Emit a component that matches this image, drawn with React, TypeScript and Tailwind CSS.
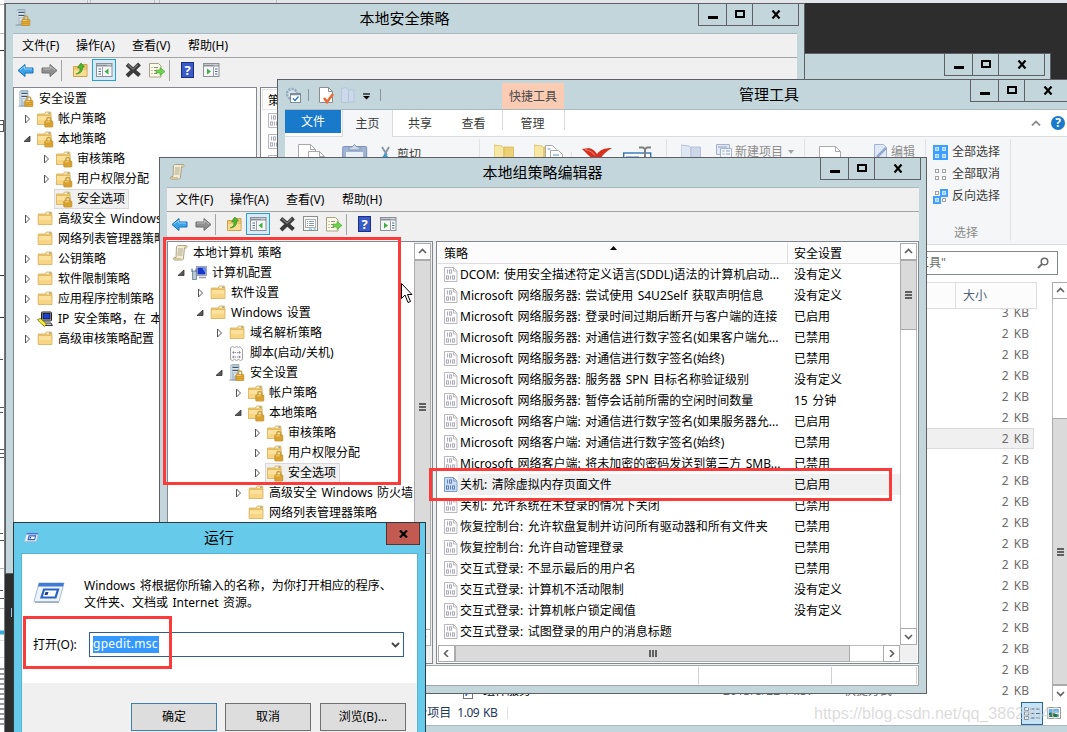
import React from 'react';
import clsx from 'clsx';

type IconName = 'server' | 'folder' | 'lockFolder' | 'ip' | 'scroll' | 'computer' | 'script';

interface TreeItem {
  level: number;
  icon: IconName;
  label: string;
  arrow?: 'open' | 'closed';
  selected?: boolean;
}

const INDENT = ['pl-[4px]', 'pl-[9px]', 'pl-[28px]', 'pl-[47px]', 'pl-[66px]', 'pl-[85px]'];

const securityTree: TreeItem[] = [
  { level: 0, icon: 'server', label: '安全设置' },
  { level: 1, icon: 'lockFolder', label: '帐户策略', arrow: 'closed' },
  { level: 1, icon: 'lockFolder', label: '本地策略', arrow: 'open' },
  { level: 2, icon: 'lockFolder', label: '审核策略', arrow: 'closed' },
  { level: 2, icon: 'lockFolder', label: '用户权限分配', arrow: 'closed' },
  { level: 2, icon: 'lockFolder', label: '安全选项', selected: true },
  { level: 1, icon: 'folder', label: '高级安全 Windows 防火墙', arrow: 'closed' },
  { level: 1, icon: 'folder', label: '网络列表管理器策略' },
  { level: 1, icon: 'folder', label: '公钥策略', arrow: 'closed' },
  { level: 1, icon: 'folder', label: '软件限制策略', arrow: 'closed' },
  { level: 1, icon: 'folder', label: '应用程序控制策略', arrow: 'closed' },
  { level: 1, icon: 'ip', label: 'IP 安全策略，在 本地计算机', arrow: 'closed' },
  { level: 1, icon: 'folder', label: '高级审核策略配置', arrow: 'closed' },
];

const policyTree: TreeItem[] = [
  { level: 0, icon: 'scroll', label: '本地计算机 策略' },
  { level: 1, icon: 'computer', label: '计算机配置', arrow: 'open' },
  { level: 2, icon: 'folder', label: '软件设置', arrow: 'closed' },
  { level: 2, icon: 'folder', label: 'Windows 设置', arrow: 'open' },
  { level: 3, icon: 'folder', label: '域名解析策略', arrow: 'closed' },
  { level: 3, icon: 'script', label: '脚本(启动/关机)' },
  { level: 3, icon: 'server', label: '安全设置', arrow: 'open' },
  { level: 4, icon: 'lockFolder', label: '帐户策略', arrow: 'closed' },
  { level: 4, icon: 'lockFolder', label: '本地策略', arrow: 'open' },
  { level: 5, icon: 'lockFolder', label: '审核策略', arrow: 'closed' },
  { level: 5, icon: 'lockFolder', label: '用户权限分配', arrow: 'closed' },
  { level: 5, icon: 'lockFolder', label: '安全选项', arrow: 'closed', selected: true },
  { level: 4, icon: 'folder', label: '高级安全 Windows 防火墙', arrow: 'closed' },
  { level: 4, icon: 'folder', label: '网络列表管理器策略' },
];

const policies: [string, string][] = [
  ['DCOM: 使用安全描述符定义语言(SDDL)语法的计算机启动...', '没有定义'],
  ['Microsoft 网络服务器: 尝试使用 S4U2Self 获取声明信息', '没有定义'],
  ['Microsoft 网络服务器: 登录时间过期后断开与客户端的连接', '已启用'],
  ['Microsoft 网络服务器: 对通信进行数字签名(如果客户端允...', '已禁用'],
  ['Microsoft 网络服务器: 对通信进行数字签名(始终)', '已禁用'],
  ['Microsoft 网络服务器: 服务器 SPN 目标名称验证级别', '没有定义'],
  ['Microsoft 网络服务器: 暂停会话前所需的空闲时间数量', '15 分钟'],
  ['Microsoft 网络客户端: 对通信进行数字签名(如果服务器允...', '已启用'],
  ['Microsoft 网络客户端: 对通信进行数字签名(始终)', '已禁用'],
  ['Microsoft 网络客户端: 将未加密的密码发送到第三方 SMB...', '已禁用'],
  ['关机: 清除虚拟内存页面文件', '已启用'],
  ['关机: 允许系统在未登录的情况下关闭', '已禁用'],
  ['恢复控制台: 允许软盘复制并访问所有驱动器和所有文件夹', '已禁用'],
  ['恢复控制台: 允许自动管理登录', '已禁用'],
  ['交互式登录: 不显示最后的用户名', '已禁用'],
  ['交互式登录: 计算机不活动限制', '没有定义'],
  ['交互式登录: 计算机帐户锁定阈值', '没有定义'],
  ['交互式登录: 试图登录的用户的消息标题', ''],
];

const sizes = ['3 KB', ...Array(18).fill('2 KB')];

const Lock = () => (
  <g>
    <path d="M9.500 10V8a2 2 0 0 1 4 0v2" fill="none" stroke="#c9a04a" strokeWidth="1.400" />
    <rect x="7.500" y="9.500" width="8" height="6" rx=".6" fill="#e3ab33" stroke="#b8841f" strokeWidth=".7" />
    <path d="M8 11.500h7M8 13.500h7" stroke="#c48f22" strokeWidth=".6" />
    <path d="M8.500 10.300h4" stroke="#ffe08a" strokeWidth=".8" />
  </g>
);

const FolderShape = () => (
  <g>
    <path d="M1.500 3.500h7l1-2h4.500a1 1 0 0 1 1 1v11.500h-13.500z" fill="#f0c96c" stroke="#d9ae56" strokeWidth=".8" />
    <path d="M9.500 2.700h3" stroke="#fff" strokeWidth="1" />
    <path d="M12.500 2.700h1.300" stroke="#3b8ee0" strokeWidth="1" />
    <path d="M1.500 5h13.500v9h-13.500z" fill="#fbe19b" stroke="#dcb565" strokeWidth=".8" />
    <path d="M2 9.500h12.500v4h-12.500z" fill="#f7d583" />
  </g>
);

function TreeIcon({ name }: { name: IconName }) {
  return (
    <svg width="18" height="18" viewBox="0 0 18 18" className="block shrink-0">
      {name === 'folder' && (
        <g transform="translate(-.2 .5)">
          <FolderShape />
        </g>
      )}
      {name === 'lockFolder' && (
        <>
          <g transform="translate(-1 .5)">
            <FolderShape />
          </g>
          <g transform="translate(.3 1.500)">
            <Lock />
          </g>
        </>
      )}
      {name === 'server' && (
        <>
          <path d="M1.500 1.500l1.500-1h7v15h-8.500z" fill="#b4c5d2" stroke="#8da1b1" strokeWidth=".7" />
          <path d="M2 1.500v14" stroke="#dbe6ee" strokeWidth="1.200" />
          <path d="M3.500 3.500h6M3.500 6.500h6" stroke="#41586b" strokeWidth="1.100" />
          <path d="M3.500 4.700h6M3.500 7.700h6" stroke="#edf4f9" strokeWidth=".9" />
          <rect x="5" y="9.500" width="2" height="2" fill="#e8f1f7" />
          <path d="M.5 16.200h8" stroke="#8fa4b3" />
          <g transform="translate(-.7 1)">
            <Lock />
          </g>
        </>
      )}
      {name === 'scroll' && (
        <>
          <path d="M4.500 2.500c.5-1 1-1 2-1h7.500c1.500 0 1.500 2.500 0 2.500h-1.500l-1 10c0 2-1 2-2 2h-7c-1.500 0-1.500-2.500 0-2.500h1.500z" fill="#f4ecd2" stroke="#a39a80" strokeWidth=".9" />
          <path d="M6 5h5M6 7h5M5.500 9h5M5.500 11h5" stroke="#aaa58f" strokeWidth=".9" />
          <path d="M12 2.500h3v1.500h-3zM2 14h7v1.500h-7z" fill="#d5c28e" />
        </>
      )}
      {name === 'computer' && (
        <>
          <rect x="5.500" y="2.500" width="10" height="9" fill="#dcdfe6" stroke="#8c93a3" strokeWidth=".8" />
          <rect x="6.500" y="3.500" width="8" height="7" fill="#1736c8" />
          <path d="M11 3.500h3.500v6z" fill="#6d93f2" />
          <path d="M8 13.500h7" stroke="#9aa0aa" strokeWidth="1.600" />
          <rect x="1.500" y="7" width="4" height="8.500" fill="#b8c9d6" stroke="#6d8192" strokeWidth=".8" />
          <path d="M1 4.500v3.500M5 4.500v3.500" stroke="#4c6a80" />
        </>
      )}
      {name === 'script' && (
        <>
          <path d="M1.500 3.500l2-1 2 1 2-1 2 1 1.500-1 2.500 3v10l-2 1-2-1-2 1-2-1-2 1-2-1z" fill="#fafafa" stroke="#a3a3a3" />
          <path d="M3 8.500l2-1.500v3zM12 8.500l-2-1.500v3zM3 13l2-1.500v3zM12 13l-2-1.500v3z" fill="#8a8a9a" />
          <path d="M5.500 8.500h1.500M8 8.500h1.500M5.500 13h1.500M8 13h1.500" stroke="#8a8a9a" />
        </>
      )}
      {name === 'ip' && (
        <>
          <rect x="4.500" y="2" width="10" height="9" rx="1" fill="#b9bcc4" stroke="#222" />
          <rect x="6" y="3.500" width="7" height="5.500" fill="#1c3fd4" stroke="#111" strokeWidth=".8" />
          <path d="M5 13h9l1.500 2.500h-9z" fill="#c6c8ce" stroke="#222" strokeWidth=".9" />
          <path d="M.5 9.500l3-1 6 5.500-2 2.500-5-4.500z" fill="#f6ee2e" stroke="#5b5a10" strokeWidth=".7" />
        </>
      )}
    </svg>
  );
}

const PolicyIcon = ({ active }: { active?: boolean }) => (
  <svg width="14" height="15" viewBox="0 0 14 15" className="block shrink-0">
    <path d="M.5.5h9l3.500 3.500v10.500h-12.500z" fill={active ? '#c9def5' : '#fcfcfc'} stroke={active ? '#7f9fc9' : '#b9b9bd'} />
    <path d="M9.500.500v3.500h3.500" fill="none" stroke={active ? '#7f9fc9' : '#b9b9bd'} />
    <g fill="none" stroke={active ? '#5878ad' : '#a3a3b4'} strokeWidth=".9">
      <path d="M3.500 2.500v4M6.500 8.500v4" />
      <rect x="5.500" y="2.900" width="2" height="3.200" />
      <rect x="2.500" y="8.900" width="2" height="3.200" />
      <rect x="8.500" y="8.900" width="2" height="3.200" />
    </g>
  </svg>
);

const Arrow = ({ state }: { state?: 'open' | 'closed' }) => (
  <svg width="14" height="12" viewBox="0 0 14 12" className="block shrink-0">
    {state === 'closed' && <path d="M2.500 2v8l4-4z" fill="#fff" stroke="#555" strokeWidth="1" />}
    {state === 'open' && <path d="M7 3v5.500h-6z" fill="#595959" stroke="#333" strokeWidth=".8" />}
  </svg>
);

function Tree({ items }: { items: TreeItem[] }) {
  return (
    <div className="flex min-w-0 flex-1 flex-col overflow-hidden pt-px">
      {items.map((item) => (
        <div key={item.label} className={clsx('flex h-5 shrink-0 items-center', INDENT[item.level])}>
          {item.level > 0 && <Arrow state={item.arrow} />}
          <div
            className={clsx(
              'flex h-5 shrink-0 items-center gap-[3px] whitespace-nowrap',
              item.selected && '-ml-0.5 border border-[#d9d9d9] bg-[#f0f0f0] pl-px pr-[3px]'
            )}
          >
            <TreeIcon name={item.icon} />
            <span>{item.label}</span>
          </div>
        </div>
      ))}
    </div>
  );
}

function WindowControls({ className }: { className?: string }) {
  return (
    <div className={clsx('flex h-[22px] w-[101px] shrink-0 border-x border-b border-[#5f6066]', className)}>
      <div className="flex w-[27px] justify-center pt-[12px]">
        <div className="h-[3px] w-[10px] bg-black" />
      </div>
      <div className="flex w-[27px] justify-center border-x border-[#5f6066] pt-[6px]">
        <div className="h-[8px] w-[10px] border-2 border-black" />
      </div>
      <div className="flex flex-1 justify-center pt-[6px]">
        <svg width="10" height="9" viewBox="0 0 10 9">
          <path d="M1.500 .5l7 8M8.500 .500l-7 8" stroke="#000" strokeWidth="2.200" />
        </svg>
      </div>
    </div>
  );
}

const BackArrow = ({ gray }: { gray?: boolean }) => (
  <svg width="17" height="15" viewBox="0 0 17 15" className={clsx('block shrink-0', gray && '-scale-x-100')}>
    <path d="M1 7.500l7-6v3.500h8v5h-8v3.500z" fill={gray ? '#8f8f8f' : '#39a3ea'} stroke={gray ? '#6f6f6f' : '#1d6fb8'} />
    <path d="M3 7l4.500-3.500v2.500h7.500" fill="none" stroke={gray ? '#bcbcbc' : '#90d4ff'} />
  </svg>
);

const PanelIcon = ({ right }: { right?: boolean }) => (
  <svg width="17" height="14" viewBox="0 0 17 14" className="block shrink-0">
    <rect x=".5" y=".5" width="15.500" height="13" fill="#f7f7f7" stroke="#8b9099" />
    <path d="M1 2.500h15" stroke="#8b9099" strokeWidth="2" />
    <path d="M11.500 2h1M13.500 2h1" stroke="#fff" />
    {right ? (
      <>
        <path d="M10.500 4v9.500" stroke="#9aa0a8" />
        <path d="M4 5.500v6l4-3z" fill="#3fae49" />
        <path d="M12 6h2.500M12 8.500h2.500M12 11h2.500" stroke="#4a6f9a" />
      </>
    ) : (
      <>
        <path d="M6.500 4v9.500" stroke="#9aa0a8" />
        <path d="M12.500 5.500v6l-4-3z" fill="#3fae49" />
        <path d="M2.500 6h2.500M2.500 8.500h2.500M2.500 11h2.500" stroke="#4a6f9a" />
      </>
    )}
  </svg>
);

function Toolbar({ withProperties }: { withProperties?: boolean }) {
  return (
    <div className="flex h-[26px] items-center pb-[2px] pl-[4px]">
      <BackArrow />
      <div className="w-[7px]" />
      <BackArrow gray />
      <div className="ml-[3px] h-[21px] w-px bg-[#a5a5a5]" />
      <svg width="15" height="16" viewBox="0 0 15 16" className="ml-[11px] block">
        <path d="M.5 4.500h5l1-2h7.500v12h-13.500z" fill="#efc96b" stroke="#cba24c" />
        <path d="M1 8h12.500v6h-12.500z" fill="#f9dd92" />
        <path d="M3 12c3-1 4.500-3 4-6h-2.500l3.500-5 3.500 4h-2c.5 4-2 7-6.500 7z" fill="#49b933" stroke="#2c8a1c" strokeWidth=".6" />
      </svg>
      <div className="ml-[4px] flex h-[22px] w-[24px] items-center justify-center border border-[#26a0da] bg-[#d5e9f6]">
        <PanelIcon />
      </div>
      <svg width="17" height="16" viewBox="0 0 17 16" className="ml-[9px] block">
        <path d="M2 2.500l12.500 11M14.500 2l-12.500 12" stroke="#3a3a3a" strokeWidth="4" />
        <path d="M3 2.700l5 4.500 5-4.500" fill="none" stroke="#7a7a7a" strokeWidth="1.200" />
      </svg>
      {withProperties && (
        <svg width="15" height="16" viewBox="0 0 15 16" className="ml-[7px] block">
          <rect x=".5" y=".5" width="14" height="14" fill="#f8f8f8" stroke="#8d8d8d" />
          <rect x="2.500" y="3.500" width="10" height="8" fill="#fff" stroke="#b0b0b0" />
          <path d="M4 5.500h1M6 5.500h5M4 7.500h1M6 7.500h5M4 9.500h1M6 9.500h5" stroke="#7f97b0" />
          <path d="M6 13h3M10.500 13h2" stroke="#47b4e8" />
        </svg>
      )}
      <svg width="17" height="16" viewBox="0 0 17 16" className={clsx('block', withProperties ? 'ml-[8px]' : 'ml-[7px]')}>
        <path d="M.5 1.500h9l2.500 2.500v11h-11.500z" fill="#fffbe6" stroke="#a9a28a" />
        <path d="M2.500 5.500h1M5 5.500h4M2.500 8.500h1M5 8.500h3M2.500 11.500h1M5 11.500h3" stroke="#8d8d8d" />
        <path d="M7 8h4v-2.500l5 4-5 4v-2.500h-4z" fill="#6ed34e" stroke="#3fa52a" strokeWidth=".6" />
      </svg>
      <div className="ml-[3px] h-[21px] w-px bg-[#a5a5a5]" />
      <div className="ml-[11px] flex h-[16px] w-[13px] items-center justify-center border border-[#1c2f86] bg-[#3a5bc7] text-[13px] font-bold leading-none text-white">
        ?
      </div>
      <div className="w-[9px]" />
      <PanelIcon right />
    </div>
  );
}

const Grip = ({ horizontal }: { horizontal?: boolean }) => (
  <div className={clsx('flex gap-px', !horizontal && 'flex-col')}>
    {[0, 1, 2].map((i) => (
      <div key={i} className={clsx('bg-[#606060]', horizontal ? 'h-[7px] w-[2px]' : 'h-[2px] w-[7px]')} />
    ))}
  </div>
);

const CHEVRONS = { up: 'M1 5l3.500-3.500L8 5', down: 'M1 2l3.500 3.500L8 2', left: 'M6 0L2.500 3.500 6 7', right: 'M3 0l3.500 3.500L3 7' };

const ScrollButton = ({ dir }: { dir: keyof typeof CHEVRONS }) => (
  <div className="flex h-[17px] w-[17px] shrink-0 items-center justify-center border border-[#ababab] bg-white">
    <svg width="9" height="7" viewBox="0 0 9 7">
      <path d={CHEVRONS[dir]} fill="none" stroke="#606060" strokeWidth="1.600" />
    </svg>
  </div>
);

interface MmcProps {
  className: string;
  title: string;
  icon: IconName;
  withProperties?: boolean;
  children: React.ReactNode;
}

function MmcWindow({ className, title, icon, withProperties, children }: MmcProps) {
  return (
    <section className={clsx('absolute flex flex-col border border-[#5f6066] bg-[#c3d6dc] px-[7px] pb-[7px]', className)}>
      <header className="flex h-[29px] shrink-0">
        <div className="w-[101px] pl-[2px] pt-[5px]">
          <TreeIcon name={icon} />
        </div>
        <h1 className="flex-1 pr-[3px] pt-[3px] text-center text-[15px] leading-[22px]">{title}</h1>
        <WindowControls className="-mr-[2px]" />
      </header>
      <div className="flex min-h-0 flex-1 flex-col border-t border-[#a9b9bf] bg-[#f0f0f0]">
        <nav className="flex h-[24px] shrink-0 items-center border-b border-[#a5a5a5] bg-[#f0f0f0] pl-[9px]">
          <span className="w-[54px]">文件(F)</span>
          <span className="w-[56px]">操作(A)</span>
          <span className="w-[56px]">查看(V)</span>
          <span>帮助(H)</span>
        </nav>
        <Toolbar withProperties={withProperties} />
        <div className="flex min-h-0 flex-1 flex-col pt-[3px]">{children}</div>
      </div>
    </section>
  );
}

function SecurityWindow() {
  return (
    <MmcWindow className="left-[5px] top-[3px] h-[571px] w-[800px]" title="本地安全策略" icon="server">
      <div className="flex min-h-0 flex-1 gap-[3px]">
        <div className="flex w-[244px] border border-[#828790] bg-white">
          <Tree items={securityTree} />
        </div>
        <div className="flex-1 border border-[#828790] bg-white pl-px pt-px">
          <div className="h-[21px] border border-[#e5e5e5] pl-[5px] leading-[21px]">策略</div>
          {[0, 1, 2].map((i) => (
            <div key={i} className="flex h-[21px] items-center pl-[6px]">
              <PolicyIcon />
            </div>
          ))}
        </div>
      </div>
    </MmcWindow>
  );
}

function PolicyWindow() {
  return (
    <MmcWindow className="left-[159px] top-[157px] h-[537px] w-[768px]" title="本地组策略编辑器" icon="scroll" withProperties>
      <div className="flex h-[423px] shrink-0 gap-[3px]">
        <div className="flex w-[266px] border border-[#828790] bg-white">
          <Tree items={policyTree} />
          <div className="flex w-[18px] flex-col bg-[#f0f0f0] pb-[17px] pr-px pt-px">
            <ScrollButton dir="up" />
            <div className="flex h-[294px] items-center justify-center border border-[#ababab] bg-[#dadada]">
              <Grip />
            </div>
            <div className="flex-1 border-x border-[#ababab] bg-white" />
            <ScrollButton dir="down" />
          </div>
        </div>
        <div className="flex flex-1 flex-col border border-[#828790] bg-white px-px pb-px pt-px">
          <div className="flex min-h-0 flex-1">
            <div className="min-w-0 flex-1">
              <div className="flex h-[21px] border-b border-[#dedede] bg-[#fcfcfc] leading-[22px]">
                <div className="flex w-[350px] border-r border-[#dedede] pl-[6px]">
                  <span className="w-[166px]">策略</span>
                  <svg width="7" height="4" viewBox="0 0 7 4" className="mt-[3px]">
                    <path d="M0 4h7l-3.500-4z" />
                  </svg>
                </div>
                <span className="pl-[6px]">安全设置</span>
              </div>
              {policies.map(([name, value], i) => (
                <div key={name} className="flex h-[21px] items-center whitespace-nowrap pl-[6px]">
                  <PolicyIcon active={i === 10} />
                  <div className={clsx('flex h-[21px] flex-1 items-center pl-[2px]', i === 10 && 'bg-[#f0f0f0]')}>
                    <span className="w-[334px]">{name}</span>
                    <span>{value}</span>
                  </div>
                </div>
              ))}
            </div>
            <div className="flex w-[17px] flex-col bg-white">
              <ScrollButton dir="up" />
              <div className="flex h-[70px] items-center justify-center border border-[#ababab] bg-[#dadada]">
                <Grip />
              </div>
              <div className="flex-1 border-x border-[#bdbdbd]" />
              <ScrollButton dir="down" />
            </div>
          </div>
          <div className="flex h-[17px] bg-[#f0f0f0]">
            <ScrollButton dir="left" />
            <div className="flex w-[395px] items-center justify-center border border-[#ababab] bg-[#dadada]">
              <Grip horizontal />
            </div>
            <div className="w-[33px] border-y border-[#bdbdbd] bg-white" />
            <ScrollButton dir="right" />
          </div>
        </div>
      </div>
      <div className="mt-px flex flex-1 border border-[#a0a5a8] bg-white py-px">
        <div className="w-[531px] border-r border-[#d0d0d0]" />
        <div className="w-[133px] border-r border-[#d0d0d0]" />
        <div className="w-[85px] border-r border-[#d0d0d0]" />
      </div>
    </MmcWindow>
  );
}

const RibbonDivider = ({ className }: { className?: string }) => (
  <div className={clsx('h-[102px] w-px shrink-0 bg-[#e1e2e4]', className)} />
);

const YellowFolder = () => (
  <>
    <path d="M0 3l8 1 2 2v22h-10z" fill="#f6e7a4" stroke="#d4b44f" strokeWidth=".7" />
    <path d="M10 5h9.500v21h-9.500z" fill="#ecd072" stroke="#d4b44f" strokeWidth=".7" />
  </>
);

function Ribbon() {
  return (
    <div className="flex h-[109px] shrink-0 items-start overflow-hidden whitespace-nowrap border-y border-[#dadbdc] bg-[#f5f6f7] pt-[2px] text-[#3b3b3b]">
      <svg width="28" height="28" viewBox="0 0 28 28" className="ml-[13px] mt-[5px] shrink-0">
        <path d="M.5.500h12l5 5v22h-17z" fill="#fff" stroke="#a9a9a9" />
        <path d="M10.500 7.500h11l5 5v15h-16z" fill="#fff" stroke="#a9a9a9" />
        <path d="M12.500.500v5h5M21.500 7.500v5h5" fill="none" stroke="#a9a9a9" />
      </svg>
      <svg width="26" height="28" viewBox="0 0 26 28" className="ml-[16px] mt-[5px] shrink-0">
        <rect x=".7" y="2.500" width="24" height="24" rx="1" fill="#9fb3d3" stroke="#7f93b8" />
        <rect x="4" y="8" width="17" height="18" fill="#e9eff7" />
        <path d="M7 6v-3h3l2.500-2.500 2.500 2.500h3v3z" fill="#cfd9e6" stroke="#8194b5" />
      </svg>
      <svg width="10" height="14" viewBox="0 0 10 14" className="ml-[13px] mt-[7px] shrink-0">
        <path d="M1 1l5 8M8 1l-4.500 8" stroke="#8694a5" strokeWidth="1.800" />
        <path d="M1 13l3-4 4 4" fill="none" stroke="#2c9fe0" strokeWidth="2" />
      </svg>
      <span className="ml-[6px] mt-[8px] leading-[16px]">剪切</span>
      <RibbonDivider className="ml-[58px]" />
      <svg width="21" height="28" viewBox="0 0 21 28" className="ml-[14px] mt-[3px] shrink-0">
        <YellowFolder />
      </svg>
      <svg width="30" height="28" viewBox="0 0 30 28" className="ml-[19px] mt-[3px] shrink-0">
        <YellowFolder />
        <path d="M11.500 3.500h7l4 4v12h-11z" fill="#fff" stroke="#a9a9a9" />
        <path d="M16.500 8.500h8l4 4v12h-12z" fill="#fff" stroke="#a9a9a9" />
        <path d="M13.500 7h3M19 13h6" stroke="#5c8ec4" />
      </svg>
      <div className="ml-[7px] mt-[13px] h-[80px] w-px shrink-0 bg-[#e1e2e4]" />
      <svg width="31" height="24" viewBox="0 0 31 24" className="ml-[10px] mt-[8px] shrink-0">
        <path d="M0 2l7-1c4 1 6 3 8 6 3-4 7-6 15-6-5 3-9 6-11 10 3 3 5 6 5 9l-9-6-9 8c2-5 3-8 5-10-4-3-7-6-11-10z" fill="#d8301d" />
        <path d="M3 2.500c5 1 8 3 10 6" stroke="#f28b78" fill="none" />
      </svg>
      <svg width="29" height="24" viewBox="0 0 29 24" className="ml-[10px] mt-[7px] shrink-0">
        <rect x=".7" y="7" width="27" height="13" fill="#fff" stroke="#2f74b5" strokeWidth="1.400" />
        <path d="M3 10.500h13v6h-13z" fill="#2f84d0" />
        <path d="M16 1.500h4l2 1.500 2-1.500h4M22 3v18" fill="none" stroke="#7f7f7f" strokeWidth="2" />
      </svg>
      <RibbonDivider className="ml-[14px]" />
      <svg width="21" height="28" viewBox="0 0 21 28" className="ml-[14px] mt-[3px] shrink-0">
        <path d="M0 3l8 1 2 2v22h-10z" fill="#dfe7f3" stroke="#b4c1da" />
        <path d="M10 5h9.500v21h-9.500z" fill="#ccd8ea" stroke="#b4c1da" />
      </svg>
      <svg width="17" height="16" viewBox="0 0 17 16" className="ml-[14px] mt-[5px] shrink-0">
        <path d="M.5.500h13v10h-13z" fill="#e3e9f4" stroke="#a5b3d0" />
        <path d="M4.500 4.500h11v11h-11z" fill="#f3f6fb" stroke="#a5b3d0" />
        <path d="M2 3h9M6.500 7h2M10 7h4M6.500 10h2M10 10h4" stroke="#8fa1c8" />
      </svg>
      <span className="ml-[2px] mt-[5px] leading-[16px] text-[#8d8d8d]">新建项目</span>
      <svg width="6" height="4" viewBox="0 0 6 4" className="ml-[5px] mt-[11px] shrink-0">
        <path d="M0 0h6l-3 4z" fill="#a5a5a5" />
      </svg>
      <RibbonDivider className="ml-[10px]" />
      <svg width="23" height="28" viewBox="0 0 23 28" className="ml-[14px] mt-[7px] shrink-0">
        <path d="M.5.500h16l5 5v22h-21z" fill="#fff" stroke="#a9a9a9" />
        <path d="M16.500.500v5h5" fill="none" stroke="#a9a9a9" />
      </svg>
      <svg width="14" height="16" viewBox="0 0 14 16" className="ml-[32px] mt-[5px] shrink-0">
        <path d="M.5.500h9l3 3v11.500h-12z" fill="#dfe8f6" stroke="#a3b4d4" />
        <path d="M3 13l9-9" stroke="#93a7cf" strokeWidth="2.500" />
      </svg>
      <span className="ml-[3px] mt-[5px] leading-[16px] text-[#8d8d8d]">编辑</span>
      <RibbonDivider className="ml-[10px]" />
      <div className="ml-[7px] mt-[4px] flex w-[77px] flex-col">
        <SelectItem label="全部选择" on={[0, 1, 2, 3]} />
        <SelectItem label="全部取消" on={[]} />
        <SelectItem label="反向选择" on={[1, 2]} />
        <span className="mt-[16px] h-4 pl-[21px] leading-4 text-[#8a8a8a]">选择</span>
      </div>
      <RibbonDivider />
    </div>
  );
}

function SelectItem({ label, on }: { label: string; on: number[] }) {
  return (
    <div className="flex h-[22px] items-center gap-[4px] pb-[4px]">
      <svg width="15" height="15" viewBox="0 0 15 15" className="shrink-0">
        {[0, 1, 2, 3].map((i) => {
          const x = (i % 2) * 7;
          const y = Math.floor(i / 2) * 7;
          const active = on.includes(i);
          return (
            <g key={i}>
              {active && <rect x={x} y={y} width="8" height="8" fill="#3f9eff" />}
              <rect
                x={x + 2.5}
                y={y + 2.5}
                width="3"
                height="3"
                fill={active ? '#8accff' : '#fff'}
                stroke={active ? '#c9e7ff' : '#a2a2a2'}
              />
            </g>
          );
        })}
      </svg>
      <span>{label}</span>
    </div>
  );
}

function ExplorerWindow() {
  return (
    <section className="absolute left-[277px] top-[79px] isolate flex h-[653px] w-[790px] flex-col overflow-hidden border-l border-t border-[#5f6066] bg-[#c3d6dc] pl-[7px]">
      <header className="flex h-[29px] shrink-0 items-start whitespace-nowrap">
        <svg width="17" height="17" viewBox="0 0 17 17" className="mt-[7px] shrink-0">
          <circle cx="7" cy="7" r="5" fill="#d7e3ec" stroke="#8fabc2" strokeWidth="2.500" strokeDasharray="2.200 1" />
          <rect x="5.500" y="6.500" width="10" height="9" fill="#fff" stroke="#7c8c98" />
          <path d="M5.500 7.500h10" stroke="#7c8c98" strokeWidth="1.500" />
          <path d="M8 11.500l2 2 3.500-4" fill="none" stroke="#2277c2" strokeWidth="1.300" />
        </svg>
        <div className="ml-[6px] mt-[9px] h-[12px] w-px shrink-0 bg-[#87939a]" />
        <svg width="16" height="17" viewBox="0 0 16 17" className="ml-[10px] mt-[7px] shrink-0">
          <path d="M.5.500h9l4 4v11h-13z" fill="#fff" stroke="#8d8d8d" />
          <path d="M9.500.500v4h4" fill="none" stroke="#8d8d8d" />
          <path d="M5 11l3 4 6-8" fill="none" stroke="#ea6a35" strokeWidth="2.600" />
        </svg>
        <svg width="14" height="16" viewBox="0 0 14 16" className="ml-[6px] mt-[7px] shrink-0">
          <path d="M.5 1.500l4-1 3 2v13h-7zM7.500 3h5.500v12h-5.500z" fill="#cbd9ea" stroke="#b4c5dc" />
        </svg>
        <svg width="7" height="7" viewBox="0 0 7 7" className="ml-[8px] mt-[13px] shrink-0">
          <path d="M0 1h7" stroke="#000" strokeWidth="1.200" />
          <path d="M0 3h7l-3.500 3.500z" />
        </svg>
        <div className="ml-[10px] mt-[9px] h-[12px] w-px shrink-0 bg-[#87939a]" />
        <div className="ml-[121px] mt-[3px] h-[26px] w-[62px] shrink-0 bg-[#fbccb4] text-center leading-[27px] text-[#4a4a4a]">快捷工具</div>
        <h1 className="ml-[175px] shrink-0 pt-[3px] text-[15px] leading-[22px]">管理工具</h1>
        <WindowControls className="ml-[171px]" />
      </header>
      <nav className="flex h-[27px] shrink-0 border-t border-[#a9b9bf] bg-white text-[#3b3b3b]">
        <div className="h-[23px] w-[56px] bg-[#1979ca] text-center leading-[24px] text-white">文件</div>
        <div className="relative z-10 ml-px h-[27px] w-[51px] border-x border-[#dadbdc] bg-[#f5f6f7] text-center leading-[27px]">主页</div>
        <div className="w-[54px] text-center leading-[27px]">共享</div>
        <div className="w-[53px] text-center leading-[27px]">查看</div>
        <div className="ml-[2px] h-[20px] w-[63px] border-x border-[#dadbdc] pr-[2px] text-center leading-[27px]">管理</div>
        <svg width="10" height="6" viewBox="0 0 10 6" className="ml-[466px] mt-[10px]">
          <path d="M1 5.500l4-4 4 4" fill="none" stroke="#8e8e8e" strokeWidth="1.800" />
        </svg>
        <div className="ml-[10px] mt-[6px] flex h-[14px] w-[14px] items-center justify-center rounded-full bg-[#1979ca] text-[12px] font-bold leading-none text-white">
          ?
        </div>
      </nav>
      <Ribbon />
      <div className="flex h-[37px] shrink-0 justify-end bg-white pr-[9px] pt-[6px]">
        <div className="flex h-[24px] w-[250px] items-center justify-end border border-[#828790] text-[#6d6d6d]">
          <span>搜索"管理工具"</span>
          <svg width="12" height="12" viewBox="0 0 12 12" className="ml-[91px] mr-[8px]">
            <circle cx="7.500" cy="4.500" r="3.300" fill="none" stroke="#6d6d6d" strokeWidth="1.500" />
            <path d="M5 7l-4 4" stroke="#6d6d6d" strokeWidth="2" />
          </svg>
        </div>
      </div>
      <div className="flex min-h-0 flex-1 bg-white">
        <div className="flex flex-1 flex-col">
          <div className="relative z-10 flex h-[27px] w-[752px] shrink-0 justify-end border border-[#dedede] bg-[#fcfcfc] leading-[26px] text-[#4c607a]">
            <div className="w-[81px] border-l border-[#dedede] pl-[7px]">大小</div>
          </div>
          <div className="-mt-[7px]">
            {sizes.map((size, i) => (
              <div
                key={i}
                className={clsx(
                  'flex h-[21px] w-[749px] items-center justify-end border pr-[4px] text-[#6d6d6d] [word-spacing:2px]',
                  i === 6 ? 'border-[#dadada] bg-[#f0f0f0]' : 'border-transparent'
                )}
              >
                {i === 18 && (
                  <div className="flex flex-1 pl-[177px] [word-spacing:0px]">
                    <svg width="14" height="16" viewBox="0 0 14 16" className="mt-[2px]">
                      <rect x=".5" y="5.500" width="9" height="9" fill="#fff" stroke="#777" />
                      <path d="M3 12c0-2 1-3 4-3" fill="none" stroke="#2c6fc0" strokeWidth="1.500" />
                    </svg>
                    <span className="ml-[6px] text-black">组件服务</span>
                    <span className="ml-[192px] w-[121px]">2013/8/22 14:57</span>
                    <span>快捷方式</span>
                  </div>
                )}
                {size}
              </div>
            ))}
          </div>
        </div>
        <div className="flex w-[15px] flex-col overflow-hidden">
          <ScrollButton dir="up" />
          <div className="h-[119px] shrink-0 border-l border-[#bdbdbd]" />
          <div className="flex h-[267px] w-[17px] shrink-0 items-center justify-center border border-[#ababab] bg-[#dadada]">
            <Grip />
          </div>
          <ScrollButton dir="down" />
        </div>
      </div>
      <footer className="flex h-[24px] shrink-0 items-center bg-white text-[#1e395b]">
        <span className="pl-[119px]">1 个项目</span>
        <span className="ml-[6px] tracking-[-0.5px]">1.09 KB</span>
        <div className="ml-[10px] h-[12px] w-px bg-[#e3e3e3]" />
        <div className="ml-auto flex h-[23px] w-[22px] items-center justify-center border border-[#26679e] bg-[#c5e2f7]">
          <svg width="17" height="13" viewBox="0 0 17 13">
            <path d="M.5.500h4v3h-4zM.5 5h4v3h-4zM.5 9.500h4v3h-4z" fill="#fff" stroke="#7e93a5" />
            <path d="M6.500 2h4M6.500 6.500h4M6.500 11h4M12 2h4M12 6.500h4M12 11h4" stroke="#54687a" />
          </svg>
        </div>
        <svg width="14" height="12" viewBox="0 0 14 12" className="ml-[4px] mr-[6px]">
          <rect x=".5" y=".5" width="13" height="11" fill="#fff" stroke="#9a9a9a" />
          <path d="M2 2h10v4h-10z" fill="#67b4f0" />
          <path d="M2 6c4-2 6 2 10 1v3h-10z" fill="#1f6f4a" />
        </svg>
      </footer>
      <div className="h-[7px] shrink-0 border-t border-[#a9b9bf]" />
    </section>
  );
}

const RunIcon = ({ className }: { className?: string }) => (
  <svg viewBox="0 0 32 22" className={clsx('block shrink-0', className)}>
    <path d="M6 1h25l-5 18.500h-25z" fill="#eef4fb" stroke="#a5b9d4" />
    <path d="M6 1h25l-1 3.500h-25z" fill="#3f7ad6" />
    <path d="M11 7.500h14l-2.500 8h-14z" fill="#fff" stroke="#2b62c4" strokeWidth="2.200" />
    <path d="M12.500 10l-1 3h3l1-3z" fill="#203a8c" />
    <path d="M2 20.500h24" stroke="#9fb0c6" />
  </svg>
);

function RunDialog() {
  return (
    <section className="absolute left-[13px] top-[522px] flex h-[214px] w-[413px] flex-col border border-[#2b3b43] bg-[#66cbea] px-[7px]">
      <header className="flex h-[30px] shrink-0">
        <div className="w-[34px] pl-[3px] pt-[9px]">
          <RunIcon className="h-[11px] w-[15px]" />
        </div>
        <h1 className="flex-1 pr-[3px] pt-[3px] text-center text-[15px] leading-[22px]">运行</h1>
        <div className="-mr-[2px] flex h-[22px] w-[34px] items-center justify-center border-x border-b border-[#5d2f2c] bg-[#c35a52]">
          <svg width="9" height="8" viewBox="0 0 9 8">
            <path d="M1 .5l7 7M8 .500l-7 7" stroke="#000" strokeWidth="2.200" />
          </svg>
        </div>
      </header>
      <div className="flex flex-1 flex-col border border-b-0 border-[#57b3d0] bg-white">
        <div className="flex h-[78px] shrink-0 pl-[11px] pt-[23px]">
          <RunIcon className="mt-[5px] h-[22px] w-[32px]" />
          <p className="ml-[19px] whitespace-nowrap leading-[17px]">
            Windows 将根据你所输入的名称，为你打开相应的程序、
            <br />
            文件夹、文档或 Internet 资源。
          </p>
        </div>
        <div className="flex h-[51px] shrink-0 items-start pl-[11px]">
          <span className="w-[56px] leading-[25px]">打开(O):</span>
          <div className="flex h-[25px] w-[315px] items-center border border-[#2f5f8f] pl-[3px] pr-[3px]">
            <span className="h-[17px] bg-[#3399ff] pr-px text-[12px] leading-[16px] tracking-[0.25px] text-white">gpedit.msc</span>
            <svg width="9" height="7" viewBox="0 0 9 7" className="ml-auto">
              <path d={CHEVRONS.down} fill="none" stroke="#444" strokeWidth="1.800" />
            </svg>
          </div>
        </div>
        <div className="flex flex-1 items-start bg-[#f0f0f0] pl-[109px] pt-[20px] text-center leading-[26px]">
          <button className="h-[28px] w-[86px] border border-[#3c7fb1] bg-[#dddddd]">确定</button>
          <button className="ml-[8px] h-[28px] w-[86px] border border-[#707070] bg-[#dddddd]">取消</button>
          <button className="ml-[9px] h-[28px] w-[86px] border border-[#707070] bg-[#dddddd]">浏览(B)...</button>
        </div>
      </div>
    </section>
  );
}

// Sliver of the host application that shows along the left and top edges
function HostEdge() {
  return (
    <svg width="1067" height="732" viewBox="0 0 1067 732" className="absolute left-0 top-0">
      <rect width="1067" height="3" fill="#e2e5ea" />
      <path d="M87.500 0v3M154.500 0v3M90.500 0v3M159.500 0v3M276.500 0v3" stroke="#b9bcc2" />
      <rect width="4" height="732" fill="#fff" />
      <rect x="4" y="3" width="1" height="729" fill="#77797f" />
      <path d="M0 50.500h4M0 275.500h4M0 317.500h4" stroke="#333" />
      <path d="M0 4.500h4M0 33.500h4M0 568.500h4M0 608.500h4" stroke="#bbb" />
      <path d="M0 120.500h4M0 124.500h3M3.500 120v11M0 131.500h4M0 359.500h3M0 407.500h4M0 412.500h3M0 449.500h4M0 453.500h4M0 457.500h4M0 533.500h3M0 540.500h4M0 590.500h3M0 598.500h4" stroke="#555" />
      <path d="M0 632.500h4" stroke="#39a9d8" strokeWidth="4" />
      <path d="M0 640.500h4M0 657.500h4" stroke="#ddd" />
      <path d="M2 668v60" stroke="#999" strokeWidth="4" strokeDasharray="2 3" />
      <path d="M11.500 608v9" stroke="#9cc4e8" />
    </svg>
  );
}

export default function App() {
  return (
    <main
      className="relative h-[732px] w-[1067px] overflow-hidden bg-[#2d2d2d] text-[12px] leading-[18px] text-black [word-spacing:1.3px]"
      style={{ fontFamily: '"Noto Sans", "Noto Sans CJK SC", sans-serif' }}
    >
      <HostEdge />
      <section className="absolute left-[700px] top-[53px] flex h-[60px] w-[351px] justify-end border border-[#5f6066] bg-[#c3d6dc] pr-[5px]">
        <WindowControls />
      </section>
      <SecurityWindow />
      <ExplorerWindow />
      <PolicyWindow />
      <RunDialog />

      <div className="absolute left-[163px] top-[237px] h-[248px] w-[238px] border-[3px] border-[#fb3a3a]" />
      <div className="absolute left-[429px] top-[468px] h-[33px] w-[463px] border-[3px] border-[#fb3a3a]" />
      <div className="absolute left-[23px] top-[616px] h-[53px] w-[149px] border-[3px] border-[#fb3a3a]" />

      <svg width="13" height="21" viewBox="0 0 13 21" className="absolute left-[401px] top-[283px]">
        <path d="M.5.500v15l3.500-3.500 3 7.500 2.500-1-3-7h4.500z" fill="#fff" stroke="#000" />
      </svg>
      <div
        className="absolute left-[814px] top-[704px] whitespace-nowrap text-[16px] leading-[20px] text-[#d0d0d0]/75"
        style={{ fontFamily: '"Liberation Sans", Arial, sans-serif' }}
      >
        https://blog.csdn.net/qq_38628046
      </div>
    </main>
  );
}
